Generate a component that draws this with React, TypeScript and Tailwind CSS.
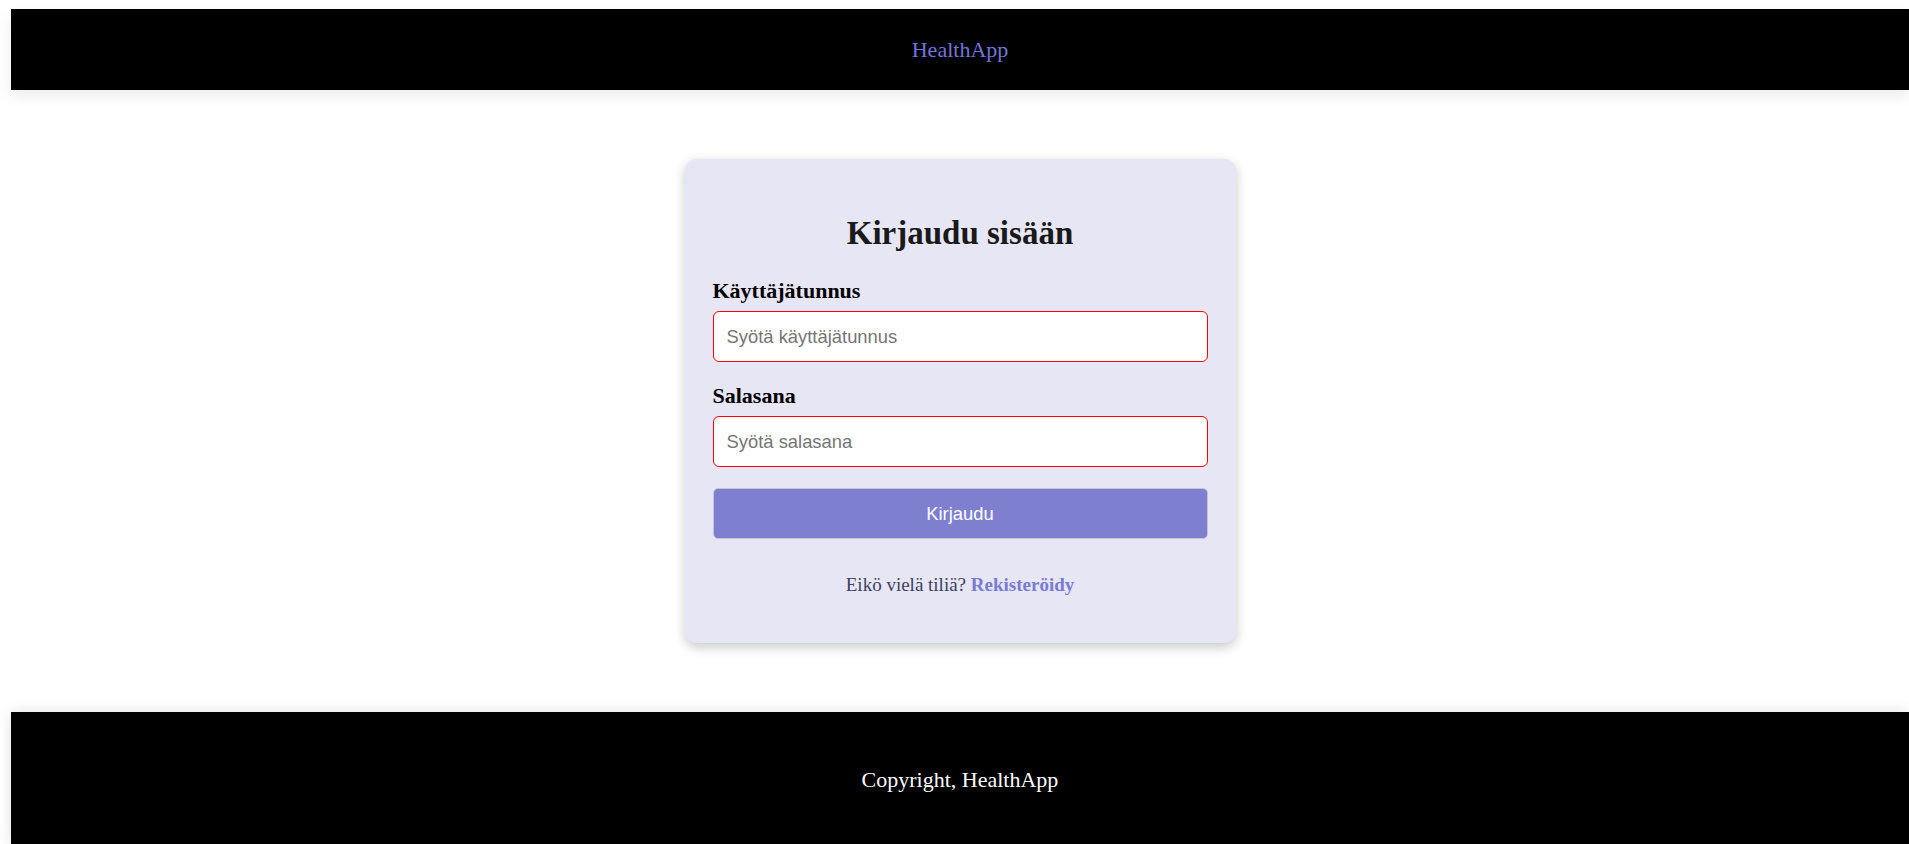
export default function App() {
  return (
    <div className="min-h-screen bg-white pl-[11px] pt-[9px] font-['Liberation_Serif','Times_New_Roman',serif]">
      <header className="flex h-[81px] items-center justify-center bg-black shadow-[0_6px_14px_rgba(0,0,0,0.08)]">
        <span className="text-[22px] leading-[25px] text-[#7474dc]">HealthApp</span>
      </header>

      <main className="flex justify-center pt-[69px] pb-[69px]">
        <div className="w-[551px] rounded-xl bg-[#e6e6f5] px-[28px] pt-[56px] pb-[47px] shadow-[0_4px_12px_rgba(0,0,0,0.22)]">
          <h1 className="text-center text-[33px] leading-[36px] font-bold text-[#1a1a1a]">Kirjaudu sisään</h1>

          <form className="mt-[27px] flex flex-col" onSubmit={(e) => e.preventDefault()}>
            <label htmlFor="username" className="text-[22px] leading-[25px] font-bold text-black">
              Käyttäjätunnus
            </label>
            <input
              id="username"
              type="text"
              placeholder="Syötä käyttäjätunnus"
              className="mt-[8px] h-[51px] w-full rounded-[6px] border border-[#ff0000] bg-white px-[13px] font-['Liberation_Sans',Arial,sans-serif] text-[18.4px] text-black placeholder:text-[#757575] outline-none"
            />

            <label htmlFor="password" className="mt-[21px] text-[22px] leading-[25px] font-bold text-black">
              Salasana
            </label>
            <input
              id="password"
              type="password"
              placeholder="Syötä salasana"
              className="mt-[8px] h-[51px] w-full rounded-[6px] border border-[#ff0000] bg-white px-[13px] font-['Liberation_Sans',Arial,sans-serif] text-[18.4px] text-black placeholder:text-[#757575] outline-none"
            />

            <button
              type="submit"
              className="mt-[21px] h-[51px] w-full rounded-[5px] border border-[#c4c4d8] bg-[#7f7fd0] font-['Liberation_Sans',Arial,sans-serif] text-[18.4px] text-white"
            >
              Kirjaudu
            </button>
          </form>

          <p className="mt-[35px] text-center text-[19px] leading-[22px] text-[#3f3f60]">
            Eikö vielä tiliä?{" "}
            <a href="#" className="font-bold text-[#7a7ad2]">
              Rekisteröidy
            </a>
          </p>
        </div>
      </main>

      <footer className="flex h-[134px] items-center justify-center bg-black shadow-[0_0_14px_rgba(0,0,0,0.12)]">
        <span className="text-[22px] leading-[25px] text-white">Copyright, HealthApp</span>
      </footer>
    </div>
  );
}
